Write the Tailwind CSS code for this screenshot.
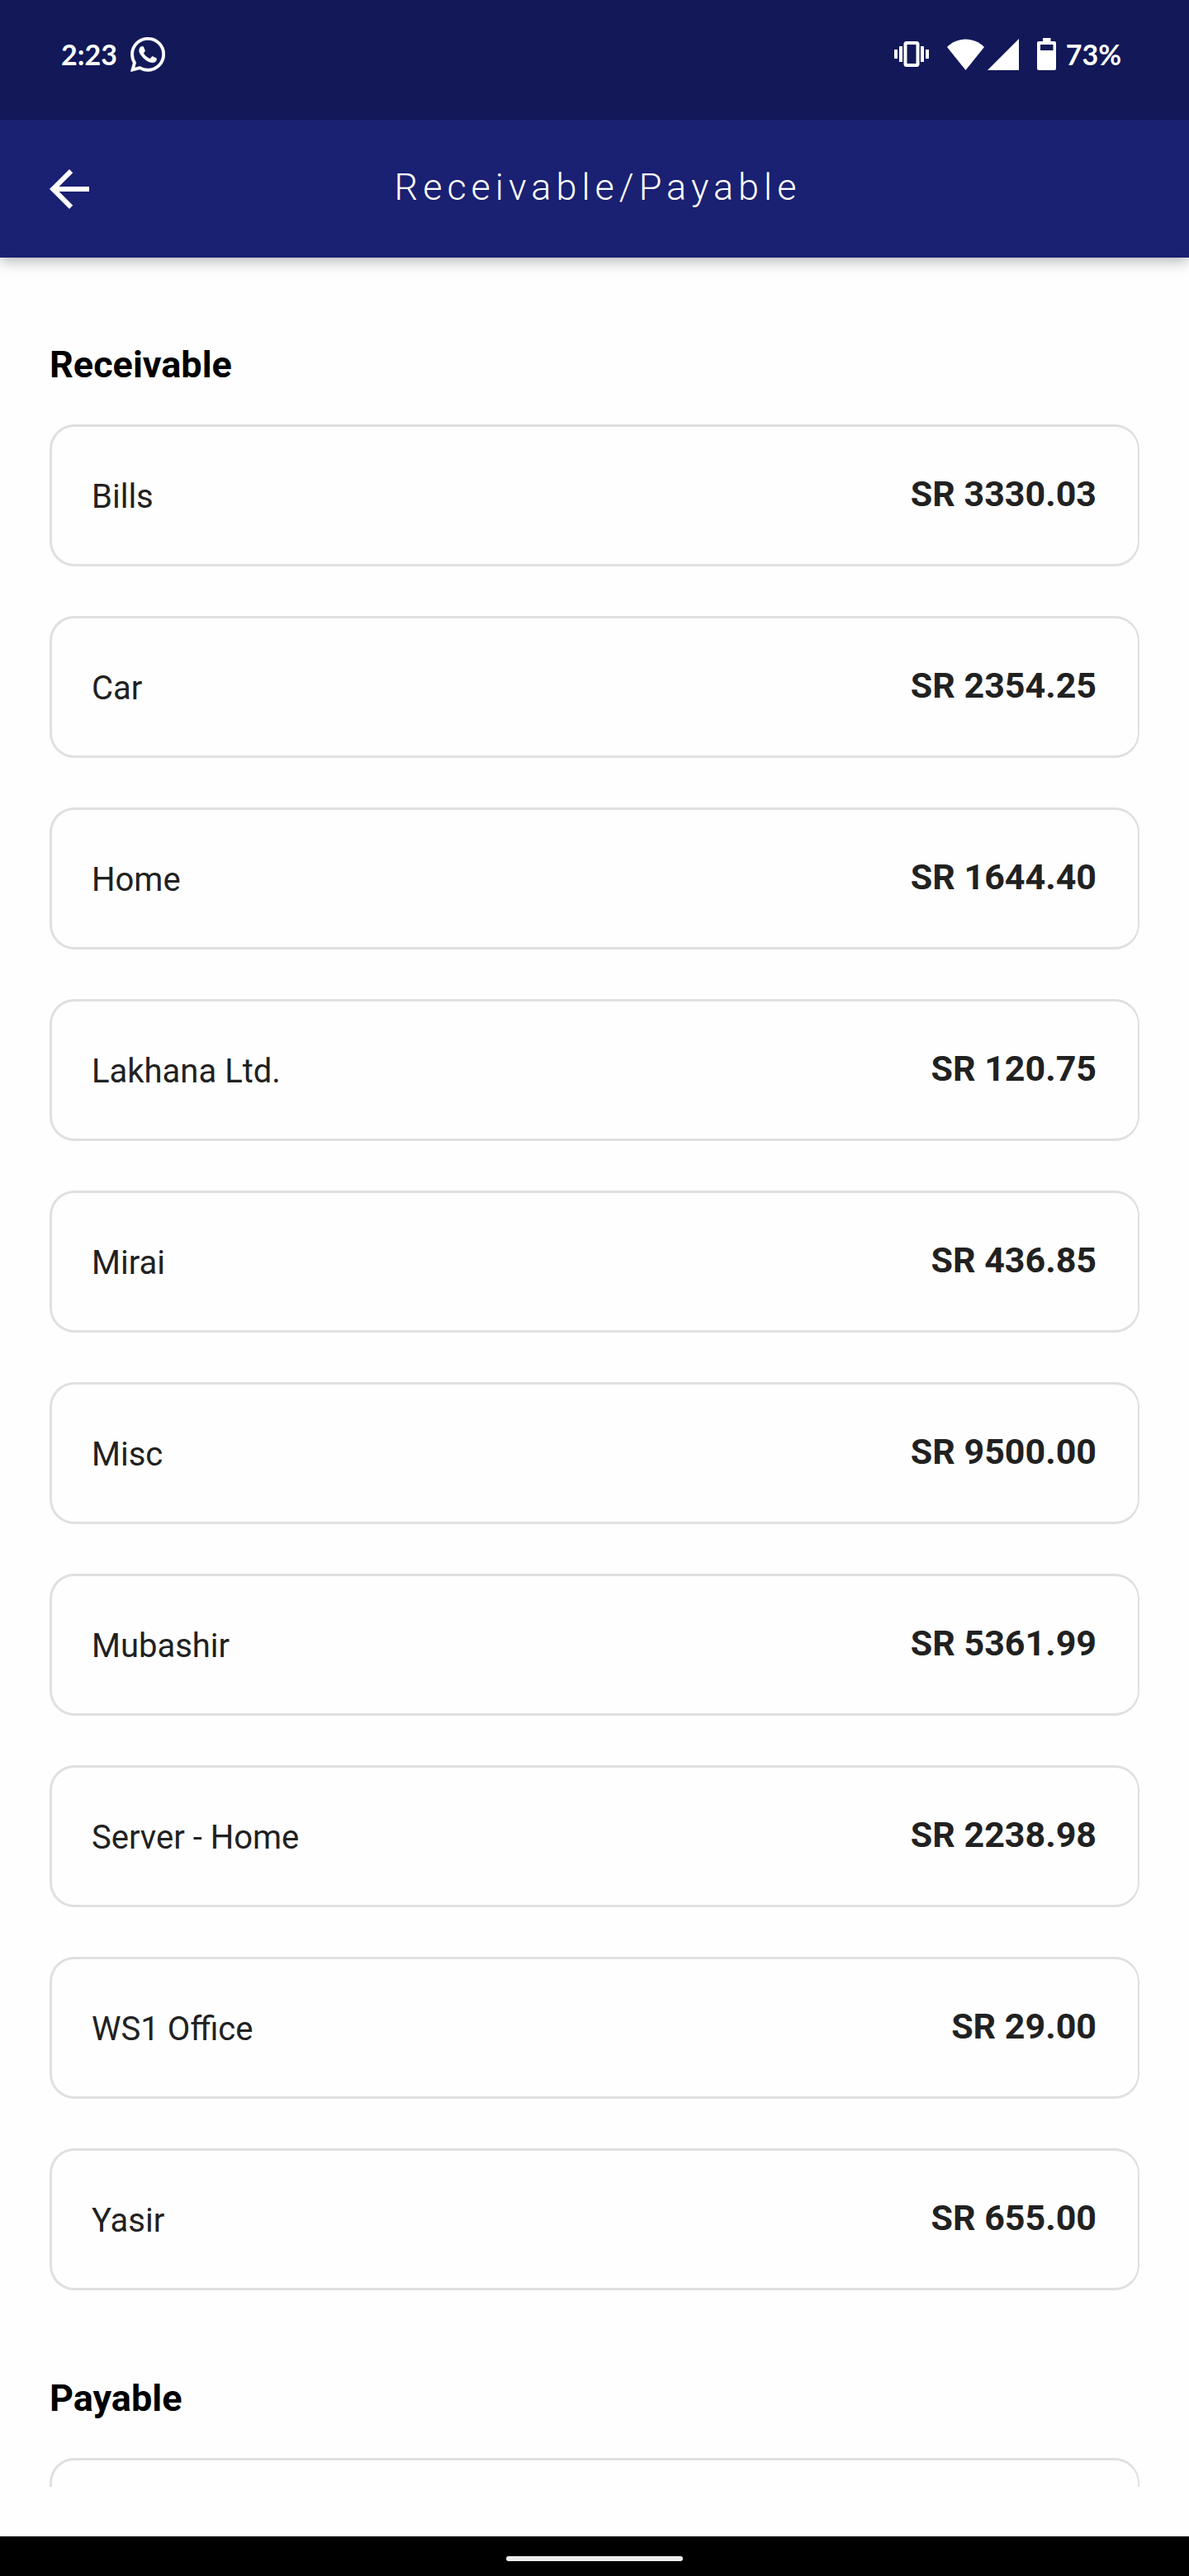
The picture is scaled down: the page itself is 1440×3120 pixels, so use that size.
<!DOCTYPE html>
<html lang="en">
  <head>
    <meta charset="UTF-8" />
    <meta name="viewport" content="width=device-width, initial-scale=1.0" />
    <title>Receivable/Payable</title>
    <script src="https://cdn.jsdelivr.net/npm/@tailwindcss/browser@4"></script>
  </head>
  <body
    class="flex h-screen flex-col bg-[#fefefe] font-['Roboto',sans-serif] text-[#212121]"
  >
    <!-- Status bar -->
    <div
      class="z-20 flex h-[145px] shrink-0 items-center justify-between bg-[#121858] pr-[82px] pb-[14px] pl-[74px] font-['Lato',sans-serif] text-[34px] font-bold text-white"
    >
      <div class="flex items-center gap-4">
        <span>2:23</span>
        <svg class="h-[42px] w-[42px] fill-current" viewBox="0 0 24 24">
          <path
            stroke="currentColor"
            stroke-width=".2"
            d="M17.472 14.382c-.297-.149-1.758-.867-2.03-.967-.273-.099-.471-.148-.67.15-.197.297-.767.966-.94 1.164-.173.199-.347.223-.644.075-.297-.15-1.255-.463-2.39-1.475-.883-.788-1.48-1.761-1.653-2.059-.173-.297-.018-.458.13-.606.134-.133.298-.347.446-.52.149-.174.198-.298.298-.497.099-.198.05-.371-.025-.52-.075-.149-.669-1.612-.916-2.207-.242-.579-.487-.5-.669-.51-.173-.008-.371-.01-.57-.01-.198 0-.52.074-.792.372-.272.297-1.04 1.016-1.04 2.479 0 1.462 1.065 2.875 1.213 3.074.149.198 2.096 3.2 5.077 4.487.709.306 1.262.489 1.694.625.712.227 1.36.195 1.871.118.571-.085 1.758-.719 2.006-1.413.248-.694.248-1.289.173-1.413-.074-.124-.272-.198-.57-.347m-5.421 7.403h-.004a9.87 9.87 0 01-5.031-1.378l-.361-.214-3.741.982.998-3.648-.235-.374a9.86 9.86 0 01-1.51-5.26c.001-5.45 4.436-9.884 9.888-9.884 2.64 0 5.122 1.03 6.988 2.898a9.825 9.825 0 012.893 6.994c-.003 5.45-4.437 9.884-9.885 9.884m8.413-18.297A11.815 11.815 0 0012.05 0C5.495 0 .16 5.335.157 11.892c0 2.096.547 4.142 1.588 5.945L.057 24l6.305-1.654a11.882 11.882 0 005.683 1.448h.005c6.554 0 11.89-5.335 11.893-11.893a11.821 11.821 0 00-3.48-8.413z"
          />
        </svg>
      </div>
      <div class="flex items-center">
        <!-- vibrate -->
        <svg class="mr-[22px] h-[31px] w-[42px]" viewBox="0 0 42 31">
          <rect
            x="13.5"
            y="2"
            width="15"
            height="27"
            rx="1.5"
            fill="none"
            stroke="currentColor"
            stroke-width="4"
          />
          <path
            fill="currentColor"
            d="M0 10h4v11H0zM6 6h4v19H6zM32 6h4v19h-4zM38 10h4v11h-4z"
          />
        </svg>
        <!-- wifi -->
        <svg class="mr-1 h-[38px] w-[45px] fill-current" viewBox="0 0 45 38">
          <path d="M22.500 38 0 10C6 4 14 .5 22.500 .5S39 4 45 10z" />
        </svg>
        <!-- signal -->
        <svg class="mr-[22px] h-[38px] w-[38px] fill-current" viewBox="0 0 38 38">
          <path d="M38 0v38H0z" />
        </svg>
        <!-- battery -->
        <svg class="mr-3 h-[39px] w-[23px] fill-current" viewBox="0 0 23 39">
          <path
            fill-rule="evenodd"
            d="M7 0h9.500v4H21q2 0 2 2v31q0 2-2 2H2q-2 0-2-2V6q0-2 2-2h5zM4 8v7h15.500V8z"
          />
        </svg>
        <span>73%</span>
      </div>
    </div>

    <!-- App bar -->
    <header
      class="z-10 grid h-[167px] shrink-0 grid-cols-[72px_1fr_72px] items-center bg-[#1a2072] px-12 text-white shadow-[0_4px_16px_rgba(0,0,0,0.3)]"
    >
      <button type="button" aria-label="Back">
        <svg class="h-[72px] w-[72px] fill-current" viewBox="0 0 24 24">
          <path
            d="M20 11H7.830l5.590-5.590L12 4l-8 8 8 8 1.410-1.410L7.830 13H20v-2z"
          />
        </svg>
      </button>
      <h1 class="pb-1 pl-2 text-center text-[45px] font-light tracking-[6px]">
        Receivable/Payable
      </h1>
    </header>

    <main
      class="mb-[60px] min-h-0 flex-1 overflow-y-auto px-[60px] pt-[100px] [scrollbar-width:none]"
    >
      <section class="mb-[101px]">
        <h2 class="mb-[42px] text-[45px] leading-[60px] font-bold text-black">
          Receivable
        </h2>
        <ul class="receivable flex flex-col gap-[60px]"></ul>
      </section>
      <section>
        <h2 class="mb-[42px] text-[45px] leading-[60px] font-bold text-black">
          Payable
        </h2>
        <ul>
          <li
            class="h-[172px] rounded-[30px] border-3 border-r-2 border-[#e0e0e0]"
          ></li>
        </ul>
      </section>
    </main>

    <!-- Gesture bar -->
    <div class="flex h-12 shrink-0 justify-center bg-black pt-6">
      <div class="h-[6px] w-[214px] rounded-full bg-[#ececec]"></div>
    </div>

    <script>
      const receivables = [
        ["Bills", "3330.03"],
        ["Car", "2354.25"],
        ["Home", "1644.40"],
        ["Lakhana Ltd.", "120.75"],
        ["Mirai", "436.85"],
        ["Misc", "9500.00"],
        ["Mubashir", "5361.99"],
        ["Server - Home", "2238.98"],
        ["WS1 Office", "29.00"],
        ["Yasir", "655.00"],
      ];

      const list = document.querySelector(".receivable");
      for (const [name, amount] of receivables) {
        const item = document.createElement("li");
        item.className =
          "flex h-[172px] items-center justify-between rounded-[30px] border-3 border-r-2 border-[#e0e0e0] pr-[50px] pl-12";
        item.innerHTML = `
          <span class="pt-1 text-[40px]">${name}</span>
          <span class="pb-1 text-[43px] font-bold">SR ${amount}</span>`;
        list.appendChild(item);
      }
    </script>
  </body>
</html>
